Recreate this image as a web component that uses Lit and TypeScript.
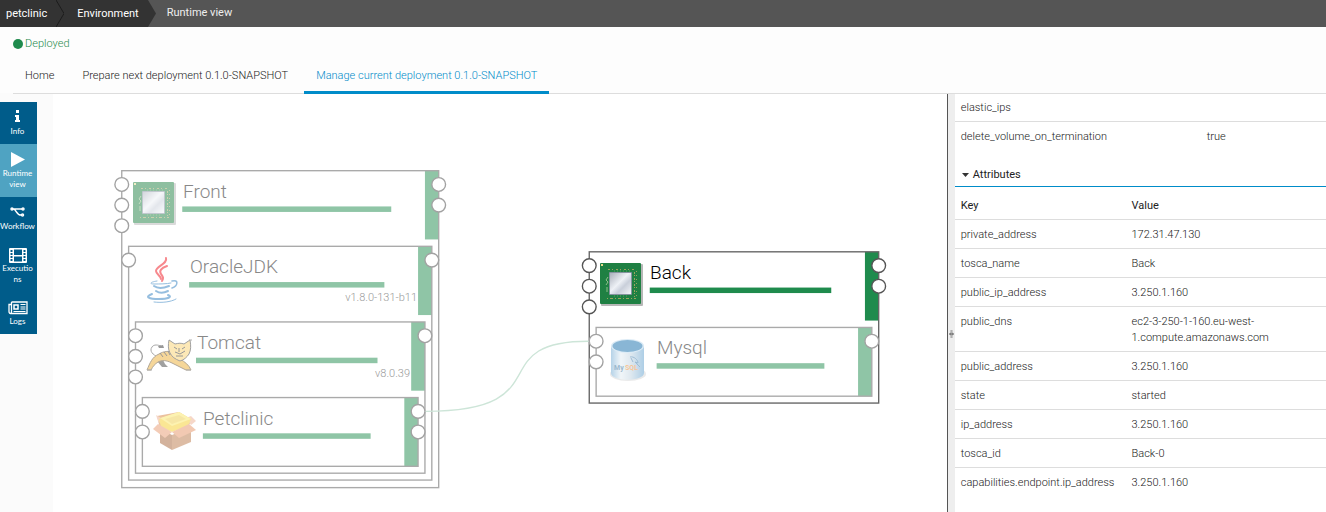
import { LitElement, html, svg, css } from "lit";
import { customElement, state } from "lit/decorators.js";

interface TopologyNode {
  name: string;
  version?: string;
  icon: "chip" | "java" | "tomcat" | "box" | "mysql";
  x: number;
  y: number;
  width: number;
  height: number;
  left: number;
  right: number;
  selected?: boolean;
}

/* Node geometry is in canvas units; ZOOM turns the units into pixels. */
const ZOOM = 11 / 16;

const NODES: TopologyNode[] = [
  { name: "Front", icon: "chip", x: 100, y: 113, width: 461, height: 461, left: 3, right: 2 },
  { name: "OracleJDK", version: "v1.8.0-131-b11", icon: "java", x: 110, y: 223, width: 441, height: 340, left: 1, right: 1 },
  { name: "Tomcat", version: "v8.0.39", icon: "tomcat", x: 120, y: 333, width: 421, height: 220, left: 3, right: 1 },
  { name: "Petclinic", icon: "box", x: 130, y: 443, width: 401, height: 100, left: 2, right: 2 },
  { name: "Back", icon: "chip", x: 780, y: 231, width: 421, height: 220, left: 3, right: 2, selected: true },
  { name: "Mysql", icon: "mysql", x: 790, y: 341, width: 401, height: 100, left: 2, right: 1 },
];

const ICONS = {
  chip: svg`
    <rect x="1" y="1" width="42" height="42" rx="1" fill="#999" opacity=".7"/>
    <rect x="0" y="0" width="41" height="41" rx="1" fill="#1f8043"/>
    <rect x="1" y="1" width="2" height="2" fill="#e8dc8a"/>
    <g fill="none" stroke="#9aa35f" stroke-width="1">
      <path d="M8 6.500H36" stroke-dasharray="2 2 1 3"/>
      <path d="M7 35.500H36" stroke-dasharray="1 2 3 2"/>
      <path d="M34.500 9V34" stroke-dasharray="2 1 1 2"/>
      <path d="M36.500 8V34" stroke-dasharray="1 3"/>
      <path d="M7 24V29M8 14l-2 3 2 2-2 3" stroke="#8fbf8a"/>
      <path d="M14 8H32M14 33H28" stroke="#58a05f" stroke-dasharray="1 2"/>
    </g>
    <rect x="9" y="9" width="23" height="23" rx="1" fill="#85939f"/>
    <rect x="10" y="10" width="21" height="21" fill="url(#metal)"/>`,
  java: svg`
    <g fill="none" stroke-linecap="round">
      <g stroke="#f0141e" stroke-width="2">
        <path d="M26 1c2 6-10 8-10 13 0 3 5 5 5 8"/>
        <path d="M27 9c-6 2-8 5-6 8s3 4 1 7"/>
      </g>
      <g stroke="#2f7fc0" stroke-width="2">
        <path d="M17 24c-7 1-8 3-3 3s13 0 17-1" stroke-width="1"/>
        <path d="M14 29c4 3 10 2 15 0"/>
        <path d="M32 24c7-2 6 5 0 7" stroke-width="1.500"/>
        <path d="M16 34c3 2 8 2 12 0"/>
        <path d="M12 37c-8 3-3 5 7 5 9 0 14-2 9-4"/>
        <path d="M14 45c8 1 17 0 22-3" stroke-width="1"/>
      </g>
    </g>`,
  tomcat: svg`
    <path d="M11 24c-5-2-9-6-6-10 2-3 6-2 9-1" fill="none" stroke="#555" stroke-width="1"/>
    <path d="M11 13l5-1 1 3-5 0z" fill="#333"/>
    <path d="M10 28l5 6h6l-3-3-2-4z" fill="#444"/>
    <path d="M0 37c3-7 5-13 12-16 5-3 9-3 15-2l6 7c5 3 9 6 11 11h-5l-14-7c-6-3-10-3-14-1-3 2-5 4-7 8z" fill="#ecae35" stroke="#665030" stroke-width="1"/>
    <path d="M13 20l3 4M17 19l3 4M21 18l2 4" stroke="#333" stroke-width="1"/>
    <path d="M22 7l6 4c4-1 6-1 9 0l6-4c1 6 1 10-1 14-2 3-5 6-9 7-5-2-8-4-10-8-2-4-2-8-1-13z" fill="#fbd372" stroke="#444" stroke-width="1"/>
    <path d="M27 14l3 2M38 14l-3 2M28 19l5 2 5-3M29 23h7M32 15v4" fill="none" stroke="#333" stroke-width="1"/>
    <path d="M42 7h3M0 37h5M39 37h5" fill="none" stroke="#666"/>`,
  box: svg`
    <path d="M7 20l12 6v15L7 34z" fill="#a9683b"/>
    <path d="M19 26l19-8v15l-19 8z" fill="#bd7c4c"/>
    <path d="M4 7l22-4 13 8-5 8H7z" fill="#d9843f"/>
    <path d="M33 9l5-2 5 5-5 4zM3 6l5 3-2 6z" fill="#eeb193"/>
    <path d="M6 10L26 3l12 7-3 7-16 6-11-5z" fill="#f6cf2c"/>
    <path d="M7 9L26 3l12 7-19 7z" fill="#fbe765"/>
    <path d="M12 10l14-4 7 4-14 5z" fill="#e8c040" opacity=".6"/>
    <path d="M5 15l14 8-7 6L0 20z" fill="#e99b72"/>
    <path d="M19 23l17-8 7 6-17 8z" fill="#e69468"/>`,
  mysql: svg`
    <ellipse cx="21" cy="36" rx="18" ry="7" fill="#999" opacity=".4"/>
    <path d="M4 8v27c0 9 33 9 33 0V8z" fill="url(#drum)"/>
    <ellipse cx="20.500" cy="8" rx="16.500" ry="7" fill="#b9d8ee"/>
    <ellipse cx="20.500" cy="8" rx="15" ry="6" fill="#1670ac"/>
    <path d="M23 19c4-1 8 3 8 6l-3-1 5 5M24 20l2 4" fill="none" stroke="#3f7bac"/>
    <text class="drum-my" x="7" y="32">My</text>
    <text class="drum-sql" x="18" y="32">SQL</text>`,
};

const PROPERTIES = [
  ["elastic_ips", ""],
  ["delete_volume_on_termination", "true"],
];

const ATTRIBUTES = [
  ["private_address", "172.31.47.130"],
  ["tosca_name", "Back"],
  ["public_ip_address", "3.250.1.160"],
  ["public_dns", "ec2-3-250-1-160.eu-west-1.compute.amazonaws.com"],
  ["public_address", "3.250.1.160"],
  ["state", "started"],
  ["ip_address", "3.250.1.160"],
  ["tosca_id", "Back-0"],
  ["capabilities.endpoint.ip_address", "3.250.1.160"],
];

@customElement("topology-canvas")
export class TopologyCanvas extends LitElement {
  static styles = css`
    :host { display: block; background: #fff; overflow: hidden; }
    svg { display: block; width: 100%; height: 100%; }
    .frame { fill: none; stroke: #aaa; stroke-width: 2; }
    .port { fill: #fff; stroke: #a2a2a2; stroke-width: 2; }
    .state { fill: #8fc5a6; }
    .icon { opacity: 0.5; }
    .name { font: 300 19px Roboto, sans-serif; fill: #888; }
    .version { font: 300 11px Roboto, sans-serif; fill: #999; text-anchor: end; }
    .selected .frame { stroke: #666; }
    .selected .port { stroke: #555; }
    .selected .state { fill: #1f8b4d; }
    .selected .icon { opacity: 1; }
    .selected .name { fill: #000; }
    .link { fill: none; stroke: #cde5d8; stroke-width: 2; }
    .drum-my, .drum-sql { font: 700 7px Roboto, sans-serif; fill: #39749d; }
    .drum-sql { fill: #ef8b2c; }
  `;

  private shapes(n: TopologyNode) {
    const port = (cx: number, i: number) =>
      svg`<circle class="port" cx=${cx} cy=${20 + 30 * i} r="10"/>`;
    return svg`
      <g class=${n.selected ? "selected" : ""} transform="translate(${n.x} ${n.y})">
        <rect class="state" x=${n.width - 20} width="20" height="100"/>
        <rect class="state" x="88" y="52" width=${n.width - 157} height="8"/>
        <rect class="frame" width=${n.width} height=${n.height}/>
        ${Array.from({ length: n.left }, (_, i) => port(0, i))}
        ${Array.from({ length: n.right }, (_, i) => port(n.width, i))}
      </g>`;
  }

  private content(n: TopologyNode) {
    const x = Math.round(n.x * ZOOM);
    const y = Math.round(n.y * ZOOM);
    const right = Math.round((n.x + n.width) * ZOOM);
    return svg`
      <g class=${n.selected ? "selected" : ""}>
        <g class="icon" transform="translate(${x + 11} ${y + 11})">${ICONS[n.icon]}</g>
        <text class="name" x=${x + 61} y=${y + 27}>${n.name}</text>
        ${n.version ? svg`<text class="version" x=${right - 15} y=${y + 55}>${n.version}</text>` : ""}
      </g>`;
  }

  render() {
    return html`
      <svg role="img" aria-label="Deployed topology">
        <defs>
          <linearGradient id="metal" x1="0" y1="0" x2="1" y2="1">
            <stop offset="0" stop-color="#aab0bb"/>
            <stop offset=".45" stop-color="#eef1f6"/>
            <stop offset=".65" stop-color="#c9cfda"/>
            <stop offset="1" stop-color="#f4f6f9"/>
          </linearGradient>
          <linearGradient id="drum">
            <stop offset="0" stop-color="#6ea8d2"/>
            <stop offset=".3" stop-color="#e3edf4"/>
            <stop offset=".6" stop-color="#c0d3e1"/>
            <stop offset="1" stop-color="#5e9fce"/>
          </linearGradient>
        </defs>
        <g transform="scale(${ZOOM})">
          ${NODES.map((n) => this.shapes(n))}
          <path class="link" d="M542 463C742 463 622 361 779 361"/>
        </g>
        ${NODES.map((n) => this.content(n))}
      </svg>`;
  }
}

@customElement("app-root")
export class AppRoot extends LitElement {
  @state() private open = true;

  static styles = css`
    :host {
      display: flex;
      flex-direction: column;
      height: 100vh;
      overflow: hidden;
      background: #fdfdfd;
      color: #222;
      font: 300 11px/16px Roboto, sans-serif;
    }
    a { color: inherit; text-decoration: none; }
    .crumbs { display: flex; flex: none; height: 27px; background: #555; color: #eee; line-height: 27px; font-weight: 400; }
    .crumb { background: #333; color: #fff; padding: 0 9px 0 13px; }
    .crumb:first-child { padding-left: 6px; }
    .current { padding-left: 11px; line-height: 25px; }
    .arrow { display: block; width: 8px; height: 27px; }
    .inner { background: #333; }
    .status { display: flex; align-items: center; gap: 2px; padding: 9px 13px 0; color: #1f8b4d; }
    .dot { width: 10px; height: 10px; border-radius: 50%; background: #1f8b4d; }
    .tabs { display: flex; flex: none; gap: 4px; margin: 16px 0 0 13px; border-bottom: 1px solid #ddd; position: relative; z-index: 1; }
    .tab { padding: 0 12px 7px; margin-bottom: -1px; border-bottom: 3px solid transparent; }
    .tab.active { color: #008cc9; border-color: #008cc9; }
    .main { display: flex; flex: 1; min-height: 0; margin-top: -1px; }
    .side { flex: none; width: 53px; padding-top: 9px; box-sizing: border-box; background: #fbfbfb; }
    .menu { width: 37px; background: #005c8a; color: #fff; font: 400 8px/11px Lato, sans-serif; }
    .item { display: block; padding: 4px 3px 7px 1px; text-align: center; word-break: break-all; }
    .item.active { background: #4fa3c2; }
    .item svg { display: block; width: 20px; height: 20px; margin: 0 auto; }
    .item span { display: block; margin: 0 -1px; }
    .item .narrow { margin: 0; }
    topology-canvas { flex: 1; min-width: 0; }
    .splitter { flex: none; display: flex; align-items: center; width: 7px; border-left: 1px solid #555; background: #eee; padding-top: 62px; }
    .splitter svg { width: 7px; height: 8px; }
    .panel { flex: none; width: 28%; background: #fff; overflow: hidden; }
    table { width: 100%; border-collapse: separate; border-spacing: 0; table-layout: fixed; }
    th, td { padding: 7px 6px 5px; text-align: left; vertical-align: top; font-weight: 300; }
    thead th { font-weight: 400; }
    .wide { width: 234px; }
    .half { width: 46%; box-sizing: border-box; }
    tr + tr th, tr + tr td, tbody.lined th, tbody.lined td { border-top: 1px solid #ddd; }
    .section {
      display: flex; align-items: center; gap: 3px; width: 100%; height: 23px; margin: 14px 0 4px; padding: 0 7px;
      border: 0; border-bottom: 1px solid #008cc9; background: none; color: #222; font: 400 11px/16px Roboto, sans-serif;
    }
    .caret { width: 8px; height: 5px; }
    @media (max-width: 700px) { .panel { width: 45%; } }
  `;

  render() {
    return html`
      <nav class="crumbs" aria-label="Breadcrumb">
        <a class="crumb" href="#petclinic">petclinic</a>
        <svg class="arrow inner" viewBox="0 0 8 27"><path d="M0 0l8 13.500L0 27" fill="none" stroke="#1c1c1c"/></svg>
        <a class="crumb" href="#environment">Environment</a>
        <svg class="arrow" viewBox="0 0 8 27"><path d="M0 0l8 13.500L0 27z" fill="#333"/></svg>
        <span class="current">Runtime view</span>
      </nav>
      <div class="status"><span class="dot"></span>Deployed</div>
      <nav class="tabs">
        <a class="tab" href="#home">Home</a>
        <a class="tab" href="#next">Prepare next deployment 0.1.0-SNAPSHOT</a>
        <a class="tab active" href="#current">Manage current deployment 0.1.0-SNAPSHOT</a>
      </nav>
      <div class="main">
        <div class="side">
          <nav class="menu">
            <a class="item" href="#info">
              <svg viewBox="0 0 20 20" fill="#fff"><path d="M8 4h3v3H8zM7 9h4v5h1v2H7v-2h1v-3H7z"/></svg>
              <span>Info</span>
            </a>
            <a class="item active" href="#runtime">
              <svg viewBox="0 0 20 20" fill="#fff"><path d="M3 4l14 7.500L3 19z"/></svg>
              <span class="narrow">Runtime view</span>
            </a>
            <a class="item" href="#workflow">
              <svg viewBox="0 0 20 20" fill="none" stroke="#fff" stroke-width="1.500">
                <path d="M4 8h10M5 8c4 0 3 7 9 6"/>
                <circle cx="4" cy="8" r="1"/><circle cx="15" cy="8" r="1"/><circle cx="14.500" cy="14" r="1"/>
              </svg>
              <span>Workflow</span>
            </a>
            <a class="item" href="#executions">
              <svg viewBox="0 0 20 20">
                <rect x="1" y="5" width="18" height="15" rx="1" fill="#fff"/>
                <path d="M6 6.500h8V12H6zM6 13.500h8V18.500H6zM2.500 7h2v2h-2zM2.500 10h2v2h-2zM2.500 13h2v2h-2zM2.500 16h2v2h-2zM15.500 7h2v2h-2zM15.500 10h2v2h-2zM15.500 13h2v2h-2zM15.500 16h2v2h-2z" fill="#005c8a"/>
              </svg>
              <span class="narrow">Executions</span>
            </a>
            <a class="item" href="#logs">
              <svg viewBox="0 0 20 20" fill="none" stroke="#fff">
                <path d="M3.500 6H19v11.500H2.500c-1 0-1.500-1-1.500-2V8.500h2.500M3.500 6v9.500c0 1 0 2-1 2" stroke-width="1.300"/>
                <rect x="6" y="9" width="4" height="4" stroke-width="1.500"/>
                <path d="M12.500 8.500h5M12.500 11h5M12.500 13h5M5.500 15.500H17.500"/>
              </svg>
              <span>Logs</span>
            </a>
          </nav>
        </div>
        <topology-canvas></topology-canvas>
        <div class="splitter" role="separator" aria-orientation="vertical">
          <svg viewBox="0 0 7 8"><path d="M3 0v8M4 0v8M1 4l2-1v2zM6 4L4 3v2z" stroke="#777" stroke-width=".6" fill="#777"/></svg>
        </div>
        <aside class="panel">
          <table>
            <tbody>
              ${PROPERTIES.map(([k, v]) => html`<tr><th class="wide" scope="row">${k}</th><td>${v}</td></tr>`)}
            </tbody>
          </table>
          <button class="section" aria-expanded=${this.open} @click=${() => (this.open = !this.open)}>
            <svg class="caret" viewBox="0 0 8 5"><path d="M0 0h7L3.500 4z" fill="#333"/></svg>Attributes
          </button>
          ${this.open
            ? html`<table>
                <thead><tr><th class="half" scope="col">Key</th><th scope="col">Value</th></tr></thead>
                <tbody class="lined">
                  ${ATTRIBUTES.map(([k, v]) => html`<tr><th scope="row">${k}</th><td>${v}</td></tr>`)}
                </tbody>
              </table>`
            : ""}
        </aside>
      </div>`;
  }
}
